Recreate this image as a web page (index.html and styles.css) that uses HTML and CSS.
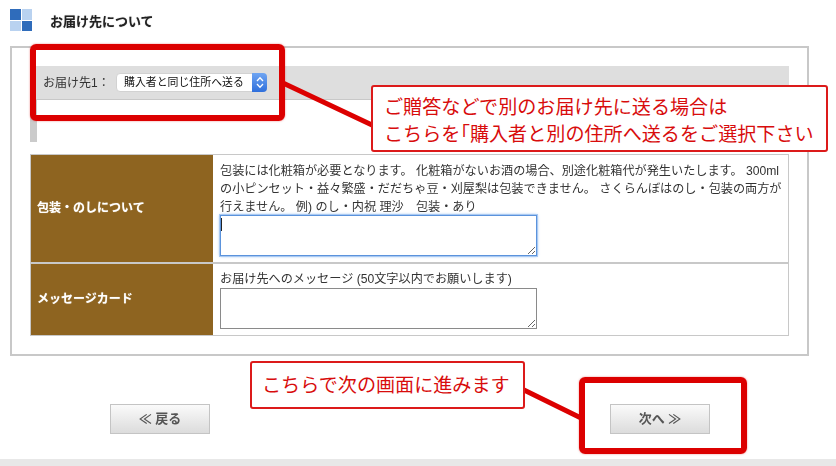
FILE: index.html
```html
<!DOCTYPE html>
<html lang="ja">
<head>
<meta charset="utf-8">
<title>お届け先について</title>
<link rel="stylesheet" href="styles.css">
</head>
<body>
<div class="page">
  <header class="head">
    <span class="logo"><i class="sq dark"></i><i class="sq light"></i><i class="sq light"></i><i class="sq dark"></i></span>
    <h1 class="title">お届け先について</h1>
  </header>

  <section class="panel">
    <div class="bar">
      <label class="bar-label">お届け先1：</label>
      <span class="select-wrap">
        <select class="select"><option>購入者と同じ住所へ送る</option></select>
        <span class="stepper">
          <svg width="10" height="15" viewBox="0 0 10 15"><path d="M2 6 5 2.8 8 6M2 9 5 12.2 8 9" fill="none" stroke="#fff" stroke-width="1.3"/></svg>
        </span>
      </span>
    </div>
    <div class="stub"></div>
    <div class="form">
      <div class="row row-one">
        <div class="label">包装・のしについて</div>
        <div class="cell">
          <p class="note">包装には化粧箱が必要となります。 化粧箱がないお酒の場合、別途化粧箱代が発生いたします。 300ml<br>の小ピンセット・益々繁盛・だだちゃ豆・刈屋梨は包装できません。 さくらんぼはのし・包装の両方が<br>行えません。 例) のし・内祝 理沙　包装・あり</p>
          <span class="area-wrap"><textarea class="area focus"></textarea><i class="caret"></i></span>
        </div>
      </div>
      <div class="row row-two">
        <div class="label">メッセージカード</div>
        <div class="cell cell-two">
          <p class="note">お届け先へのメッセージ (50文字以内でお願いします)</p>
          <span class="area-wrap"><textarea class="area"></textarea></span>
        </div>
      </div>
    </div>
  </section>

  <nav class="actions">
    <button class="btn" type="button">≪ 戻る</button>
    <button class="btn" type="button">次へ ≫</button>
  </nav>
  <div class="band"></div>

  <svg class="lines" width="836" height="466" viewBox="0 0 836 466">
    <path d="M283 83 372 125M524 390 581 418" fill="none" stroke="#dc0000" stroke-width="5"/>
  </svg>
  <div class="mark mark-top"></div>
  <div class="mark mark-next"></div>
  <div class="callout callout-top">ご贈答などで別のお届け先に送る場合は<br>こちらを｢購入者と別の住所へ送るをご選択下さい</div>
  <div class="callout callout-next">こちらで次の画面に進みます</div>
</div>
</body>
</html>
```

FILE: styles.css
```css
* { box-sizing: border-box; }
html, body { margin: 0; padding: 0; background: #fff; }
body {
  font-family: "Liberation Sans", "Noto Sans CJK JP", sans-serif;
  color: #333;
  font-size: 12px;
  line-height: 18px;
}
.page { position: relative; width: 836px; height: 466px; overflow: hidden; filter: blur(.3px); }

.head { display: flex; align-items: center; gap: 18px; height: 46px; padding: 0 0 6px 10px; }
.logo { display: grid; grid-template-columns: 11px 10px; grid-template-rows: 11px 10px; gap: 1px; width: 22px; }
.sq { display: block; }
.dark { background: #2f6cbb; }
.light { background: #b9d2f0; }
.title { margin: 3px 0 0; font-size: 13px; font-weight: 700; color: #222; line-height: 20px; text-shadow: 0 0 1px rgba(34, 34, 34, .4); }

.panel {
  width: 799px;
  height: 310px;
  margin-left: 10px;
  border: 2px solid #c8c8c8;
  padding: 18px 18px 17px;
}
.bar {
  display: flex;
  align-items: center;
  height: 34px;
  padding: 0 0 0 13px;
  background: #dedede;
  border-bottom: 1px solid #c8c8c8;
}
.bar-label { width: 73px; font-size: 12px; color: #333; }
.select-wrap { position: relative; display: block; width: 151px; height: 19px; }
.select {
  display: block;
  width: 100%;
  height: 100%;
  appearance: none;
  border: 1px solid #d2d2d2;
  border-radius: 4px;
  background: #fff;
  padding: 0 0 0 7px;
  font: 10.9px/17px "Liberation Sans", "Noto Sans CJK JP", sans-serif;
  color: #111;
}
.stepper {
  position: absolute;
  top: 0;
  right: 0;
  width: 15px;
  height: 19px;
  display: flex;
  align-items: center;
  justify-content: center;
  border-radius: 0 4px 4px 0;
  background: linear-gradient(#6fa5f2, #2f6fdc);
}
.stub { width: 7px; height: 42px; background: #cbcbcb; margin-bottom: 12px; }

.form { border: 1px solid #c8c8c8; width: 759px; }
.row { display: flex; }
.row-one { height: 109px; border-bottom: 2px solid #c8c8c8; }
.row-two { height: 71px; }
.label {
  display: flex;
  align-items: center;
  flex: 0 0 182px;
  padding: 0 0 2px 6px;
  background: #8e6420;
  color: #fff;
  font-weight: 700;
  font-size: 12px;
  text-shadow: 0 0 1px rgba(255, 255, 255, .6);
}
.cell { flex: 1; padding: 7px 7px 0; }
.cell-two { padding-top: 6px; }
.note { margin: 0; font-size: 12.15px; line-height: 18px; color: #333; white-space: nowrap; }
.row-one .note { margin-bottom: -1px; }
.area-wrap { position: relative; display: block; width: 317px; height: 41px; }
.area {
  display: block;
  width: 317px;
  height: 41px;
  margin: 0;
  padding: 2px;
  border: 1px solid #8a8a8a;
  background: #fff;
  resize: both;
  outline: none;
}
.focus {
  border-color: #5b93dc;
  box-shadow: 0 0 0 1px #a9c9f2, 0 0 3px #6ea5ea;
}
.caret { position: absolute; left: 1px; top: 3px; width: 1px; height: 13px; background: #222; }

.actions { display: flex; gap: 400px; margin: 48px 0 0 110px; }
.btn {
  width: 100px;
  height: 30px;
  padding: 0;
  border: 1px solid #c4c4c4;
  background: linear-gradient(#fafafa, #dcdcdc);
  color: #555;
  font: 700 13px/28px "Liberation Sans", "Noto Sans CJK JP", sans-serif;
}
.band { height: 7px; margin-top: 25px; background: #e8e8e8; }

.lines { position: absolute; left: 0; top: 0; pointer-events: none; }
.mark {
  position: absolute;
  border: 6px solid #dc0000;
  border-radius: 6px;
  box-shadow: 0 0 2px rgba(220, 0, 0, .5);
}
.mark-top { left: 30px; top: 44px; width: 255px; height: 77px; }
.mark-next { left: 579px; top: 377px; width: 168px; height: 77px; }
.callout {
  position: absolute;
  background: #fff;
  border: 2px solid #dc1a1a;
  border-radius: 3px;
  color: #d80c0c;
  font-size: 19.1px;
  white-space: nowrap;
}
.callout-top { left: 371px; top: 85px; width: 457px; height: 67px; padding: 7px 0 0 11px; line-height: 27px; }
.callout-next { left: 250px; top: 361px; width: 275px; height: 48px; padding: 10px 0 0 10px; line-height: 26px; }
```
